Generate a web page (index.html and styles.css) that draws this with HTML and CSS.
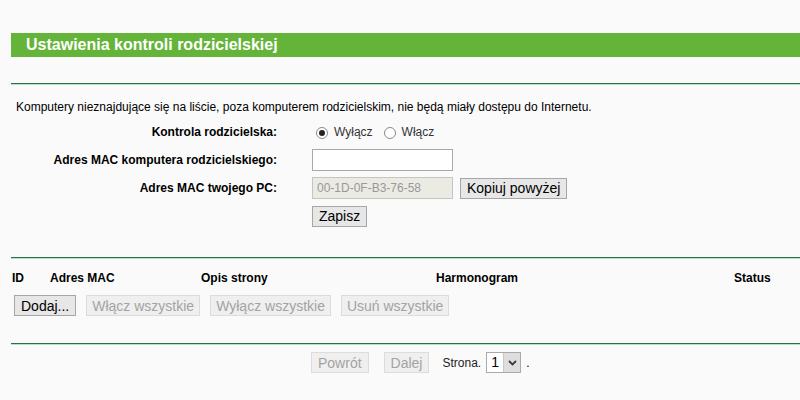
FILE: index.html
```html
<!DOCTYPE html>
<html lang="pl">

<head>
    <meta charset="UTF-8">
    <title>Ustawienia kontroli rodzicielskiej</title>
    <link rel="stylesheet" href="styles.css">
</head>

<body>
    <main class="page">
        <h1 class="title">Ustawienia kontroli rodzicielskiej</h1>
        <div class="rule first"></div>

        <p class="note">Komputery nieznajdujące się na liście, poza komputerem rodzicielskim, nie będą miały dostępu do Internetu.</p>

        <form class="settings">
            <div class="row">
                <label class="label">Kontrola rodzicielska:</label>
                <div class="field">
                    <input type="radio" name="ctrl" id="off" checked>
                    <label for="off" class="opt">Wyłącz</label>
                    <input type="radio" name="ctrl" id="on">
                    <label for="on" class="opt">Włącz</label>
                </div>
            </div>
            <div class="row">
                <label class="label" for="parent_mac">Adres MAC komputera rodzicielskiego:</label>
                <div class="field">
                    <input type="text" class="text" id="parent_mac">
                </div>
            </div>
            <div class="row">
                <label class="label">Adres MAC twojego PC:</label>
                <div class="field">
                    <input type="text" class="text" value="00-1D-0F-B3-76-58" disabled>
                    <button type="button" class="btn copy">Kopiuj powyżej</button>
                </div>
            </div>
            <div class="row">
                <span class="label"></span>
                <div class="field">
                    <button type="button" class="btn">Zapisz</button>
                </div>
            </div>
        </form>

        <div class="rule second"></div>

        <div class="list-head">
            <span class="col-id">ID</span>
            <span class="col-mac">Adres MAC</span>
            <span class="col-desc">Opis strony</span>
            <span class="col-sched">Harmonogram</span>
            <span class="col-status">Status</span>
        </div>
        <div class="list-actions">
            <button type="button" class="btn">Dodaj...</button>
            <button type="button" class="btn" disabled>Włącz wszystkie</button>
            <button type="button" class="btn" disabled>Wyłącz wszystkie</button>
            <button type="button" class="btn" disabled>Usuń wszystkie</button>
        </div>

        <div class="rule third"></div>

        <div class="pager">
            <button type="button" class="btn" disabled>Powrót</button>
            <button type="button" class="btn" disabled>Dalej</button>
            <span class="page-label">Strona.</span>
            <span class="select">
                <span class="select-value">1</span>
                <span class="select-arrow">
                    <svg width="9" height="6" viewBox="0 0 9 6"><path d="M1 1 L4.5 4.5 L8 1" fill="none" stroke="#3c3c3c" stroke-width="1.8"/></svg>
                </span>
            </span>
            <span class="dot">.</span>
        </div>
    </main>
</body>

</html>
```

FILE: styles.css
```css
body {
    margin: 0;
    background-color: #fafafa;
    font-family: "Liberation Sans", Arial, sans-serif;
    font-size: 12px;
    color: #000000;
}

.page {
    padding: 33px 0 0 11px;
}

.title {
    margin: 0;
    height: 24px;
    line-height: 24px;
    padding-left: 15px;
    background-color: #65b43a;
    color: #ffffff;
    font-size: 16px;
    font-weight: bold;
}

.rule {
    height: 0;
    border-top: 1px solid #24744a;
    border-bottom: 1px solid #b9dfc8;
}

.rule.first {
    margin-top: 26px;
}

.note {
    margin: 15px 0 0 5px;
    line-height: 14px;
}

.settings {
    margin-top: 4px;
}

.row {
    display: flex;
    align-items: center;
    height: 28px;
}

.label {
    width: 266px;
    text-align: right;
    font-weight: bold;
}

.field {
    display: flex;
    align-items: center;
    padding-left: 35px;
}

input[type="radio"] {
    appearance: none;
    width: 12px;
    height: 12px;
    margin: 1px 0 0 4px;
    border: 1px solid #8a8a8a;
    border-radius: 50%;
    background-color: #ffffff;
    position: relative;
}

input[type="radio"]:checked::after {
    content: "";
    position: absolute;
    left: 2px;
    top: 2px;
    width: 6px;
    height: 6px;
    border-radius: 50%;
    background-color: #222222;
}

.opt {
    margin: 0 0 0 6px;
    color: #333333;
}

.opt + input[type="radio"] {
    margin-left: 11px;
}

.text {
    box-sizing: border-box;
    width: 141px;
    height: 22px;
    margin: 0;
    padding: 0 4px;
    border: 1px solid #a9a9a9;
    background-color: #ffffff;
    font-family: inherit;
    font-size: 12px;
}

.text:disabled {
    background-color: #ebebe4;
    color: #999999;
    border-color: #c4c4c4;
}

.btn {
    box-sizing: border-box;
    height: 21px;
    margin: 0;
    padding: 0 6px;
    border: 1px solid #a6a6a6;
    border-radius: 0;
    background-color: #e7e7e7;
    font-family: inherit;
    font-size: 14px;
    color: #000000;
}

.btn:disabled {
    border-color: #dcdcdc;
    background-color: #efefef;
    color: #a3a3a3;
}

.copy {
    margin-left: 7px;
}

.rule.second {
    margin-top: 27px;
}

.list-head {
    display: flex;
    margin-top: 12px;
    padding-left: 1px;
    height: 14px;
    line-height: 14px;
    font-weight: bold;
}

.col-id { width: 38px; }
.col-mac { width: 151px; }
.col-desc { width: 235px; }
.col-sched { width: 298px; }

.list-actions {
    display: flex;
    gap: 10px;
    margin-top: 10px;
    padding-left: 3px;
}

.list-actions .btn:disabled {
    padding: 0 5px;
}

.rule.third {
    margin-top: 27px;
}

.pager {
    display: flex;
    align-items: center;
    margin-top: 7px;
    padding-left: 300px;
}

.pager .btn + .btn {
    margin-left: 15px;
}

.page-label {
    margin-left: 13px;
    color: #222222;
}

.select {
    display: flex;
    box-sizing: border-box;
    height: 21px;
    margin-left: 5px;
    border: 1px solid #a9a9a9;
    background-color: #ffffff;
}

.select-value {
    width: 16px;
    line-height: 19px;
    text-align: center;
    font-size: 14px;
}

.select-arrow {
    display: flex;
    align-items: center;
    justify-content: center;
    width: 16px;
    background-color: #dedede;
    border-left: 1px solid #c8c8c8;
}

.dot {
    margin-left: 5px;
}
```
